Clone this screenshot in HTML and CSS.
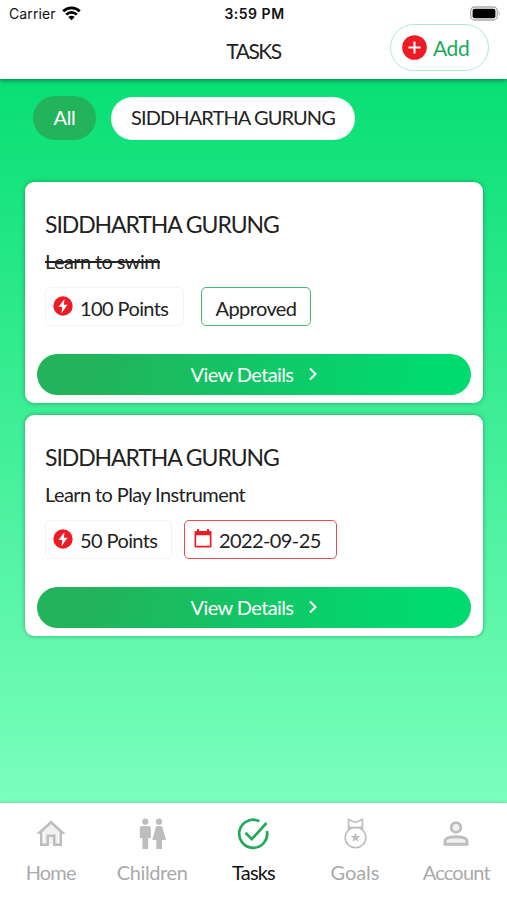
FILE: index.html
```html
<!DOCTYPE html>
<html lang="en">
<head>
    <meta charset="UTF-8">
    <title>Tasks</title>
    <link rel="stylesheet" href="styles.css">
</head>
<body>
<header class="header">
    <div class="status-bar">
        <div class="carrier">
            <span>Carrier</span>
            <svg width="19" height="15" viewBox="0 0 19 15" fill="none" stroke="#000" stroke-width="2.7">
                <path d="M1.2 5.3a11.8 11.8 0 0 1 16.6 0"/>
                <path d="M4.2 8.6a7.5 7.5 0 0 1 10.6 0"/>
                <path d="M9.5 14.3L6.3 11a4.6 4.6 0 0 1 6.4 0z" fill="#000" stroke="none"/>
            </svg>
        </div>
        <span class="clock">3:59 PM</span>
        <svg class="battery" width="31" height="16" viewBox="0 0 31 16">
            <rect x=".7" y="1" width="26.6" height="13" rx="4" fill="#fff" stroke="#aaa" stroke-width="1.3"/>
            <rect x="2.6" y="2.8" width="22.8" height="9.5" rx="2" fill="#000"/>
            <path d="M28.7 5.3q2 2.200 0 4.500z" fill="#aaa"/>
        </svg>
    </div>
    <div class="title-bar">
        <h1>TASKS</h1>
        <button class="add">
            <svg width="25" height="25" viewBox="0 0 25 25">
                <circle cx="12.500" cy="12.500" r="12.300" fill="#ed1c24"/>
                <path d="M12.500 6.500v12M6.500 12.500h12" stroke="#fff" stroke-width="2"/>
            </svg>
            <span>Add</span>
        </button>
    </div>
</header>

<main class="content">
    <!-- Child filter -->
    <div class="filters">
        <button class="filter active"><span>All</span></button>
        <button class="filter child"><span>SIDDHARTHA GURUNG</span></button>
    </div>

    <!-- Task list -->
    <section class="card">
        <h2><span>SIDDHARTHA GURUNG</span></h2>
        <p class="task done"><span>Learn to swim</span></p>
        <div class="tags">
            <div class="tag points hundred">
                <svg width="20" height="20" viewBox="0 0 20 20">
                    <circle cx="10" cy="10" r="9.700" fill="#ed1c24"/>
                    <path d="M11.500 3L5.500 11h3.700l-.7 6.200L14.500 8.800h-3.600z" fill="#fff"/>
                </svg>
                <span>100 Points</span>
            </div>
            <div class="tag approved"><span>Approved</span></div>
        </div>
        <button class="details">
            <span>View Details</span>
            <svg width="8" height="14" viewBox="0 0 8 14" fill="none" stroke="#fff" stroke-width="2"><path d="M1 1.500L6.500 7 1 12.500"/></svg>
        </button>
    </section>

    <section class="card">
        <h2><span>SIDDHARTHA GURUNG</span></h2>
        <p class="task"><span>Learn to Play Instrument</span></p>
        <div class="tags">
            <div class="tag points fifty">
                <svg width="20" height="20" viewBox="0 0 20 20">
                    <circle cx="10" cy="10" r="9.700" fill="#ed1c24"/>
                    <path d="M11.500 3L5.500 11h3.700l-.7 6.200L14.500 8.800h-3.600z" fill="#fff"/>
                </svg>
                <span>50 Points</span>
            </div>
            <div class="tag due">
                <svg width="18" height="19" viewBox="0 0 18 19" fill="#ed1c24">
                    <path d="M3 0h2v2h8V0h2v2h1.200q1.300 0 1.300 1.300v14q0 1.200-1.300 1.200H1.800Q.5 18.500.5 17.300v-14Q.5 2 1.800 2H3zM2.200 6.300v10.500h13.600V6.300z" fill-rule="evenodd"/>
                </svg>
                <span>2022-09-25</span>
            </div>
        </div>
        <button class="details">
            <span>View Details</span>
            <svg width="8" height="14" viewBox="0 0 8 14" fill="none" stroke="#fff" stroke-width="2"><path d="M1 1.500L6.500 7 1 12.500"/></svg>
        </button>
    </section>
</main>

<!-- Bottom tabs -->
<nav class="tabs">
    <a class="tab">
        <svg width="32" height="32" viewBox="0 0 32 32">
            <path d="M16 4L5 14h4v12h14V14h4z" fill="#f1f1f1"/>
            <path d="M16 2.500L1.300 15.800H5V28h9v-9h4v9h9V15.800h3.700zM16 6l8.500 7.700v11.800h-4v-9h-9v9h-4V13.700z" fill="#bdbdbd" fill-rule="evenodd"/>
        </svg>
        <span>Home</span>
    </a>
    <a class="tab children">
        <svg width="32" height="32" viewBox="0 0 32 32" fill="#bdbdbd">
            <circle cx="9.300" cy="3.700" r="3.100"/>
            <circle cx="23" cy="3.700" r="3.100"/>
            <path d="M6 8h6.600q2.200 0 2.200 2.200V20h-2.600v11H6.400V20H3.800v-9.800Q3.800 8 6 8z"/>
            <path d="M21.500 8h3q1.400 0 1.900 1.300L30 22h-4v9h-5.700v-9h-4l3.500-12.700Q20.200 8 21.500 8z"/>
        </svg>
        <span>Children</span>
    </a>
    <a class="tab selected">
        <svg width="34" height="32" viewBox="0 0 34 32" fill="none" stroke="#20a958" stroke-width="2.700">
            <path d="M23.300 3.200A14 14 0 1 0 30.900 13"/>
            <path d="M9.500 14.800l6.300 6.300L30.500 5"/>
        </svg>
        <span>Tasks</span>
    </a>
    <a class="tab goals">
        <svg width="32" height="32" viewBox="0 0 32 32" fill="none" stroke="#bdbdbd" stroke-width="1.600">
            <circle cx="16.500" cy="19.500" r="10.300"/>
            <path d="M9.500 11.800V1.500l7 3 7-3v10.300M9.500 8.800q7 2 14 0"/>
            <path d="M16.500 14.600l1.300 3.300 3.600.2-2.800 2.200.9 3.500-3-2-3 2 .9-3.500-2.800-2.200 3.600-.2z" fill="#bdbdbd" stroke="none"/>
        </svg>
        <span>Goals</span>
    </a>
    <a class="tab">
        <svg width="32" height="32" viewBox="0 0 32 32" fill="#f1f1f1" stroke="#bdbdbd" stroke-width="2.900">
            <circle cx="16" cy="9.400" r="4.800"/>
            <path d="M5 26.200v-3q0-4.300 11-4.500 11 .2 11 4.500v3z"/>
        </svg>
        <span>Account</span>
    </a>
</nav>
</body>
</html>
```
FILE: styles.css
```css
* {
    box-sizing: border-box;
}
body {
    margin: 0;
    height: 900px;
    display: flex;
    flex-direction: column;
    overflow: hidden;
    font-family: Futura, Lato, sans-serif;
    color: #222;
    background: #fff;
}
button {
    font: inherit;
    border: 0;
    padding: 0;
}
svg {
    display: block;
    flex: none;
}
span {
    white-space: nowrap;
}

/* Header */
.header {
    height: 79px;
    background: #fff;
    box-shadow: 0 1px 5px rgba(0,0,0,0.5);
    z-index: 1;
}
.status-bar {
    height: 27px;
    padding: 0 7px 0 9px;
    display: grid;
    grid-template-columns: 1fr auto 1fr;
    align-items: center;
    font-family: Inter, sans-serif;
    font-size: 14px;
    color: #111;
}
.carrier {
    display: flex;
    gap: 6px;
    align-items: center;
    letter-spacing: 0.1px;
}
.clock {
    font-weight: 600;
    letter-spacing: 0.5px;
}
.battery {
    justify-self: end;
    margin-right: -1px;
}
.title-bar {
    display: grid;
    grid-template-columns: 1fr auto 1fr;
    padding-right: 18px;
    padding-left: 18px;
}
h1 {
    grid-column: 2;
    margin: 9px 0 0;
    font-size: 21px;
    line-height: 30px;
    font-weight: 400;
    letter-spacing: -1.5px;
}
.add {
    justify-self: end;
    width: 99px;
    height: 47px;
    margin-top: -3px;
    padding: 0 0 1px 11px;
    display: flex;
    align-items: center;
    gap: 6px;
    border: 1px solid #a9efcb;
    border-radius: 24px;
    background: #fff;
    color: #20a958;
    font-size: 21px;
    letter-spacing: -0.4px;
}

/* Filters */
.content {
    flex: 1;
    padding: 17px 24px 0 25px;
    background: linear-gradient(#08df74, #7bffbd);
}
.filters {
    display: flex;
    align-items: center;
    gap: 15px;
    padding-left: 8px;
    height: 44px;
    margin-bottom: 42px;
}
.filter {
    height: 43px;
    padding-bottom: 2px;
    border-radius: 22px;
    width: 244px;
    background: #fff;
    color: #222;
    font-size: 20px;
    letter-spacing: -0.9px;
}
.filter.active {
    width: 63px;
    height: 44px;
    background: #22b35b;
    color: #fff;
    letter-spacing: -0.3px;
}

/* Task cards */
.card {
    height: 221px;
    margin-bottom: 11.500px;
    padding: 26px 12px 8px;
    display: flex;
    flex-direction: column;
    border-radius: 9px;
    background: #fff;
    box-shadow: 0 0 4px rgba(0,90,45,0.5);
}
h2 {
    margin: 0 8px;
    font-size: 23px;
    line-height: 32px;
    font-weight: 400;
    letter-spacing: -1.080px;
}
.task {
    margin: 7px 8px 0;
    font-size: 20px;
    line-height: 28px;
    letter-spacing: -0.6px;
}
.done {
    text-decoration: line-through;
}
.tags {
    display: flex;
    gap: 17px;
    margin: 12px 8px 0;
}
.tag {
    height: 39px;
    display: flex;
    align-items: center;
    border: 1px solid #f4f4f4;
    border-radius: 5px;
    font-size: 20px;
    letter-spacing: -0.6px;
}
.tag svg {
    margin-bottom: 1px;
}
.tag span {
    padding-top: 2px;
}
.points {
    padding-left: 7px;
    gap: 7px;
}
.hundred {
    width: 139px;
}
.fifty {
    width: 127px;
    margin-right: -5px;
}
.approved {
    width: 110px;
    justify-content: center;
    border-color: #43bb73;
}
.due {
    width: 153px;
    padding-left: 9px;
    gap: 7px;
    border-color: #e94b51;
}
.details {
    height: 41px;
    margin-top: auto;
    padding-bottom: 1px;
    display: flex;
    align-items: center;
    justify-content: center;
    gap: 16px;
    border-radius: 21px;
    background: linear-gradient(100deg, #22b35b 12%, #00db70 90%);
    color: #fff;
    font-size: 20px;
    letter-spacing: -0.6px;
}

/* Bottom tabs */
.tabs {
    height: 97px;
    display: grid;
    grid-template-columns: repeat(5, 1fr);
    padding-top: 15px;
    background: #fff;
    box-shadow: 0 0 5px rgba(0,0,0,0.18);
}
.tab {
    display: flex;
    flex-direction: column;
    align-items: center;
    gap: 9px;
    font-size: 20px;
    line-height: 26px;
    letter-spacing: -0.8px;
    color: #aaa;
}
.children {
    letter-spacing: -0.4px;
}
.goals {
    letter-spacing: -0.1px;
}
.selected {
    color: #111;
}
```
